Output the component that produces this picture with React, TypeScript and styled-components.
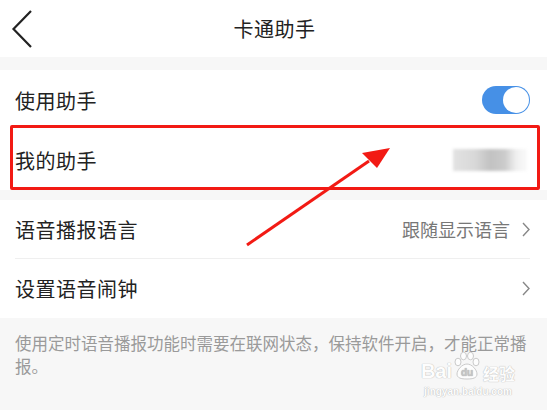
import React from "react"
import styled, { createGlobalStyle } from "styled-components"

const GlobalStyle = createGlobalStyle`
  html, body {
    margin: 0;
    padding: 0;
    background: #f7f7f7;
  }
  body {
    font-family: "Noto Sans CJK SC", "Noto Sans", sans-serif;
  }
`

const Page = styled.div`
  position: relative;
  width: 547px;
  height: 410px;
  overflow: hidden;
  background: #f7f7f7;
`

const Header = styled.header`
  height: 57px;
  background: #fff;
  display: flex;
  align-items: center;
  justify-content: center;
  position: relative;
`

const BackButton = styled.div`
  position: absolute;
  left: 11px;
  top: 10px;
  width: 24px;
  height: 40px;
`

const Title = styled.h1`
  margin: 0 0 0 2px;
  font-size: 20px;
  font-weight: 400;
  color: #222;
  letter-spacing: 0.5px;
`

const Group = styled.section<{ $gap: number }>`
  margin-top: ${(p) => p.$gap}px;
  background: #fff;
`

const Row = styled.div<{ $divider?: boolean; $height?: number }>`
  height: ${(p) => p.$height ?? 59}px;
  margin: 0 17px 0 15px;
  display: flex;
  align-items: center;
  justify-content: space-between;
  border-bottom: ${(p) => (p.$divider ? "1px solid #efefef" : "none")};
  box-sizing: border-box;
`

const Label = styled.span`
  font-size: 20px;
  color: #222;
  letter-spacing: 0.5px;
`

const Value = styled.span`
  display: flex;
  align-items: center;
  gap: 12px;
  font-size: 18px;
  color: #777;
`

const Toggle = styled.div`
  width: 48px;
  height: 28px;
  border-radius: 14px;
  background: #4690e6;
  position: relative;
  &::after {
    content: "";
    position: absolute;
    right: 1px;
    top: 1px;
    width: 26px;
    height: 26px;
    border-radius: 50%;
    background: #fff;
  }
`

const Blurred = styled.div`
  width: 74px;
  height: 22px;
  margin-right: 3px;
  background: linear-gradient(
    90deg,
    #e2e2e2 0%,
    #d8d8d8 30%,
    #c2c2c2 50%,
    #cbcbcb 70%,
    #efefef 85%,
    #fafafa 100%
  );
  filter: blur(1.5px);
`

const Highlight = styled.div`
  position: absolute;
  left: 10px;
  top: 125px;
  width: 530px;
  height: 65px;
  border: 3px solid #f21a14;
  border-radius: 2px;
  box-sizing: border-box;
  pointer-events: none;
`

const Arrow = styled.svg`
  position: absolute;
  left: 0;
  top: 0;
  pointer-events: none;
`

const Note = styled.div`
  padding: 14px 15px 0 15px;
  font-size: 16.5px;
  line-height: 23px;
  color: #9a9a9a;
`

const NoteText = styled.span`
  display: inline;
`

const Watermark = styled.div`
  position: absolute;
  left: 418px;
  top: 351px;
  width: 100px;
  display: flex;
  flex-direction: column;
  align-items: center;
  color: #fdfdfd;
  text-shadow: 0 0 1px #bdbdbd, 0 0 1px #bdbdbd;
  font-family: "Liberation Sans", sans-serif;
  line-height: 1;
  pointer-events: none;
`

const WatermarkMain = styled.div`
  display: flex;
  align-items: flex-end;
  font-size: 20px;
  font-weight: 700;
`

const WatermarkCn = styled.span`
  font-family: "Noto Sans CJK SC", sans-serif;
  font-size: 16px;
  font-weight: 700;
  margin-left: 1px;
`

const WatermarkSub = styled.div`
  font-size: 10px;
  font-weight: 700;
  margin-top: 6px;
`

const Chevron = () => (
  <svg width="8" height="15" viewBox="0 0 8 15">
    <path d="M1 1l6 6.5-6 6.5" fill="none" stroke="#888" strokeWidth="1.4" />
  </svg>
)

const Paw = () => (
  <svg width="30" height="30" viewBox="0 0 30 30">
    <g fill="#fdfdfd" stroke="#c4c4c4" strokeWidth="0.9">
      <ellipse cx="6" cy="11" rx="3" ry="3.8" />
      <ellipse cx="11.5" cy="5" rx="3" ry="3.8" />
      <ellipse cx="18.5" cy="5" rx="3" ry="3.8" />
      <ellipse cx="24" cy="11" rx="3" ry="3.8" />
      <path d="M15 13c-5 0-10 6-10 10 0 4 4 5 10 5s10-1 10-5c0-4-5-10-10-10z" />
    </g>
    <text
      x="15"
      y="25"
      textAnchor="middle"
      fontSize="10"
      fontWeight="700"
      fill="#c4c4c4"
      fontFamily="Liberation Sans, sans-serif"
    >
      du
    </text>
  </svg>
)

export default function App() {
  return (
    <Page>
      <GlobalStyle />
      <Header>
        <BackButton>
          <svg width="24" height="40" viewBox="0 0 24 40">
            <path d="M20 1L2.5 19 20 37" fill="none" stroke="#222" strokeWidth="2.2" />
          </svg>
        </BackButton>
        <Title>卡通助手</Title>
      </Header>

      <Group $gap={13}>
        <Row $height={60}>
          <Label>使用助手</Label>
          <Toggle />
        </Row>
        <Row $height={60}>
          <Label>我的助手</Label>
          <Blurred />
        </Row>
      </Group>

      <Group $gap={10}>
        <Row $divider>
          <Label>语音播报语言</Label>
          <Value>
            跟随显示语言
            <Chevron />
          </Value>
        </Row>
        <Row>
          <Label>设置语音闹钟</Label>
          <Value>
            <Chevron />
          </Value>
        </Row>
      </Group>

      <Note>
        <NoteText>使用定时语音播报功能时需要在联网状态，保持软件开启，才能正常播报。</NoteText>
      </Note>

      <Watermark>
        <WatermarkMain>
          Bai
          <Paw />
          <WatermarkCn>经验</WatermarkCn>
        </WatermarkMain>
        <WatermarkSub>jingyan.baidu.com</WatermarkSub>
      </Watermark>

      <Highlight />
      <Arrow width="547" height="410" viewBox="0 0 547 410">
        <path d="M247 245 L369 161" stroke="#f21a14" strokeWidth="3" />
        <path d="M390 148 L362 153 L377 168 Z" fill="#f21a14" />
      </Arrow>
    </Page>
  )
}
